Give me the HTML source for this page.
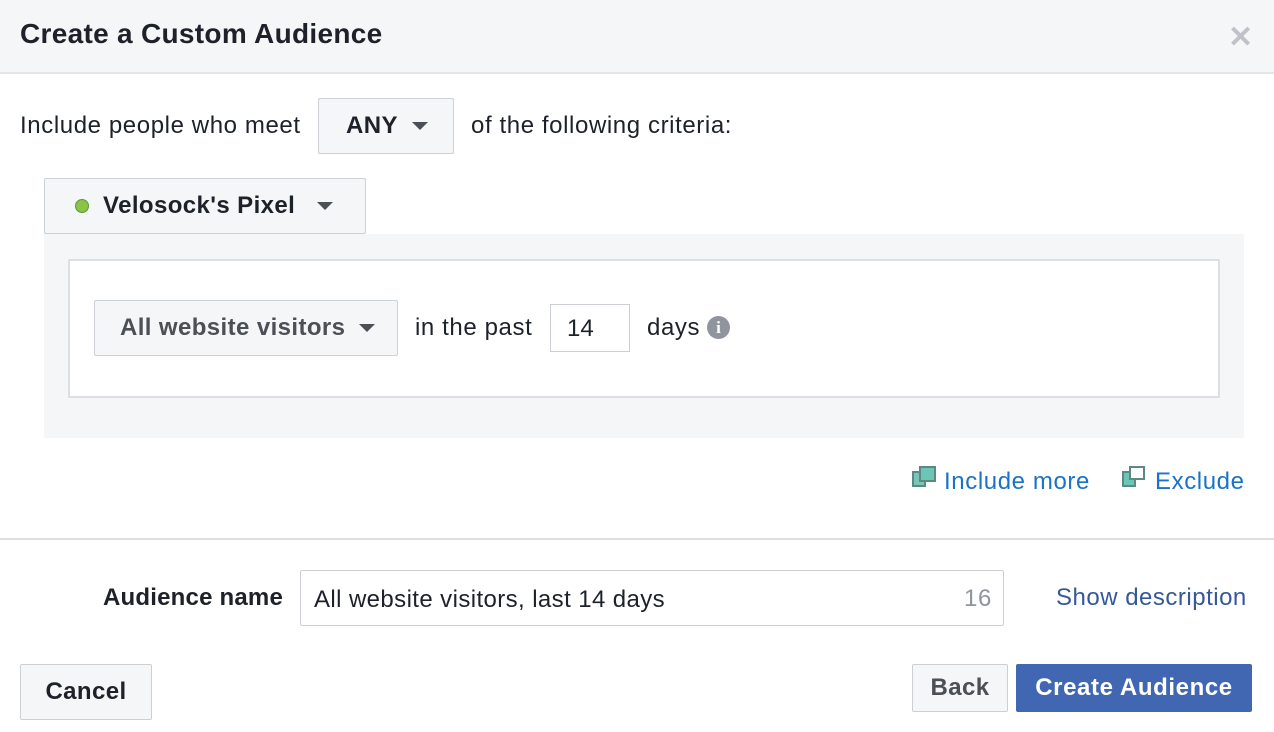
<!DOCTYPE html>
<html><head><style>
body{margin:0;width:1274px;height:732px;background:#fff;font-family:"Liberation Sans",sans-serif;color:#1d2129;position:relative;overflow:hidden}
.a{position:absolute;white-space:nowrap}
.btn{position:absolute;background:#f5f6f7;border:1px solid #ccd0d5;border-radius:2px;box-sizing:border-box;font-weight:bold;color:#4b4f56;font-size:24px;letter-spacing:0.4px;display:flex;align-items:center;white-space:nowrap}
.tri{display:inline-block;width:0;height:0;border-left:8px solid transparent;border-right:8px solid transparent;border-top:8px solid #4b4f56}
.t{font-size:24px;line-height:28px;letter-spacing:0.6px}
</style></head><body>
<div class="a" style="left:0;top:0;width:1274px;height:72px;background:#f5f6f7;border-bottom:2px solid #e5e6e9"></div>
<div class="a" style="left:20px;top:18px;font-size:28px;font-weight:bold;color:#1d2129;letter-spacing:0.3px">Create a Custom Audience</div>
<div class="a" style="left:1228px;top:20px;font-size:30px;color:#bec2c9;font-weight:bold">✕</div>

<div class="a t" style="left:20px;top:112px">Include people who meet</div>
<div class="btn" style="left:318px;top:98px;width:136px;height:56px;color:#1d2129;padding-left:27px">ANY<span class="tri" style="margin-left:14px"></span></div>
<div class="a t" style="left:471px;top:112px">of the following criteria:</div>

<div class="a" style="left:44px;top:234px;width:1200px;height:204px;background:#f5f6f7"></div>
<div class="btn" style="left:44px;top:178px;width:322px;height:56px;color:#1d2129;padding-left:30px"><span style="width:14px;height:14px;border-radius:50%;background:#8bc34a;border:1px solid #5a9a2a;margin-right:14px;box-sizing:border-box"></span>Velosock's Pixel<span class="tri" style="margin-left:22px"></span></div>
<div class="a" style="left:68px;top:259px;width:1152px;height:139px;background:#fff;border:2px solid #dddfe2;box-sizing:border-box"></div>
<div class="btn" style="left:94px;top:300px;width:304px;height:56px;padding-left:25px">All website visitors<span class="tri" style="margin-left:14px"></span></div>
<div class="a t" style="left:415px;top:314px">in the past</div>
<div class="a" style="left:550px;top:304px;width:80px;height:48px;border:1px solid #ccd0d5;box-sizing:border-box;font-size:24px;padding:10px 0 0 16px">14</div>
<div class="a t" style="left:647px;top:314px">days</div>
<div class="a" style="left:707px;top:316px;width:23px;height:23px;border-radius:50%;background:#90949c;color:#fff;font-weight:bold;font-size:17px;text-align:center;line-height:23px;font-family:'Liberation Serif',serif">i</div>

<div class="a" style="left:912px;top:471px;width:14px;height:16px;background:#7ac4b8;border:2px solid #5b8a85;box-sizing:border-box"></div>
<div class="a" style="left:919px;top:466px;width:17px;height:16px;background:#6cc6b6;border:2px solid #5b8a85;box-sizing:border-box"></div>
<div class="a t" style="left:944px;top:468px;color:#1a73c7">Include more</div>
<div class="a" style="left:1122px;top:471px;width:14px;height:16px;background:#6cc6b6;border:2px solid #5b8a85;box-sizing:border-box"></div>
<div class="a" style="left:1129px;top:466px;width:16px;height:14px;background:#fff;border:2px solid #5b8a85;box-sizing:border-box"></div>
<div class="a t" style="left:1155px;top:468px;color:#1a73c7">Exclude</div>

<div class="a" style="left:0;top:538px;width:1274px;height:2px;background:#dddfe2"></div>

<div class="a t" style="left:103px;top:584px;font-weight:bold;letter-spacing:0.2px">Audience name</div>
<div class="a" style="left:300px;top:570px;width:704px;height:56px;border:1px solid #ccd0d5;border-radius:2px;box-sizing:border-box"></div>
<div class="a t" style="left:314px;top:586px;letter-spacing:0.4px">All website visitors, last 14 days</div>
<div class="a t" style="left:964px;top:585px;color:#90949c">16</div>
<div class="a t" style="left:1056px;top:584px;color:#365899;letter-spacing:0.5px">Show description</div>

<div class="btn" style="left:20px;top:664px;width:132px;height:56px;color:#1d2129;justify-content:center">Cancel</div>
<div class="btn" style="left:912px;top:664px;width:96px;height:48px;justify-content:center">Back</div>
<div class="a" style="left:1016px;top:664px;width:236px;height:48px;background:#4267b2;border-radius:2px;color:#fff;font-weight:bold;font-size:24px;letter-spacing:0.6px;display:flex;align-items:center;justify-content:center">Create Audience</div>
</body></html>
